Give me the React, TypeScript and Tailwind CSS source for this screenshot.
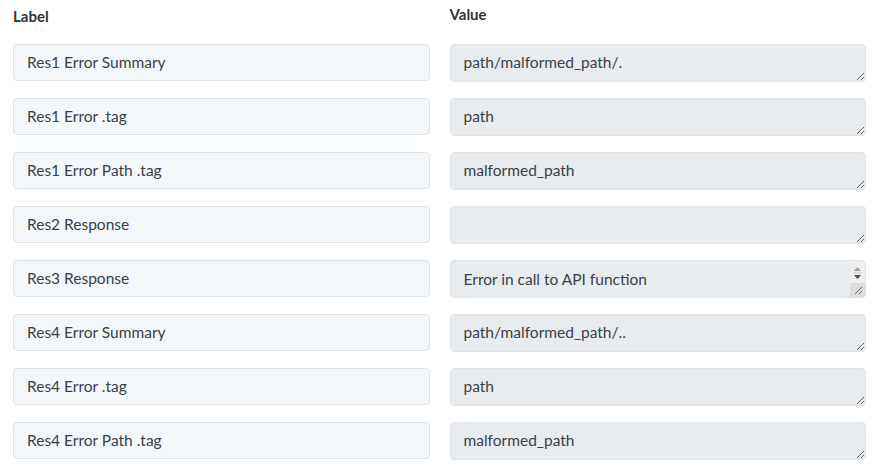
import React from "react";

const rows: { label: string; value: string; scroll?: boolean }[] = [
  { label: "Res1 Error Summary", value: "path/malformed_path/." },
  { label: "Res1 Error .tag", value: "path" },
  { label: "Res1 Error Path .tag", value: "malformed_path" },
  { label: "Res2 Response", value: "" },
  { label: "Res3 Response", value: "Error in call to API function", scroll: true },
  { label: "Res4 Error Summary", value: "path/malformed_path/.." },
  { label: "Res4 Error .tag", value: "path" },
  { label: "Res4 Error Path .tag", value: "malformed_path" },
];

function FakeScrollbar() {
  return (
    <div className="absolute right-[1px] top-[1px] bottom-[1px] w-[15px] flex flex-col rounded-r-[3px] overflow-hidden">
      <div className="h-[22px] bg-[#eceef0] flex flex-col items-center pt-[4px]">
        <svg width="9" height="14" viewBox="0 0 9 14">
          <path d="M1 6 L4.5 2 L8 6 Z" fill="#a3a3a3" />
          <line x1="0.5" y1="8" x2="8.5" y2="8" stroke="#c8c8c8" strokeWidth="1" />
          <path d="M1 10 L8 10 L4.5 14 Z" fill="#505050" />
        </svg>
      </div>
      <div className="flex-1 bg-[#dcdcdc]" />
    </div>
  );
}

export default function App() {
  return (
    <div
      className="w-[882px] h-[472px] bg-white overflow-hidden pl-[13px] pr-[16px] pt-[6px]"
      style={{ fontFamily: "Lato, 'Open Sans', sans-serif" }}
    >
      <div className="grid grid-cols-2 gap-x-[20px] h-[38px]">
        <div className="text-[15px] leading-[20px] font-bold text-[#2f3338]">Label</div>
        <div className="text-[15px] leading-[20px] font-bold text-[#2f3338] -mt-[2px]">Value</div>
      </div>
      <div className="flex flex-col gap-y-[16px]">
        {rows.map((r, i) => (
          <div key={i} className="grid grid-cols-2 gap-x-[20px] items-start h-[38px]">
            <input
              readOnly
              value={r.label}
              className="h-[37px] w-full rounded-[4px] border border-[#dde3ea] bg-[#f4f7fa] px-[13px] pb-[1px] text-[15.5px] text-[#3b4046] outline-none"
              style={{ fontFamily: "Lato, 'Open Sans', sans-serif" }}
            />
            <div className="relative h-[38px]">
              <textarea
                readOnly
                value={r.value}
                className={
                  "block h-[38px] w-full rounded-[4px] border border-[#e0e4e8] bg-[#e9ecef] px-[13px] text-[15.5px] leading-[20px] text-[#3b4046] outline-none overflow-hidden " +
                  (r.scroll ? "pt-[8px] resize-none" : "pt-[7px] resize-y")
                }
                style={{ fontFamily: "Lato, 'Open Sans', sans-serif" }}
              />
              {r.scroll && (
                <>
                  <FakeScrollbar />
                  <svg
                    className="absolute right-[3px] bottom-[3px]"
                    width="10"
                    height="10"
                    viewBox="0 0 10 10"
                  >
                    <line x1="9" y1="2" x2="2" y2="9" stroke="#6a6a6a" strokeWidth="1" />
                    <line x1="9" y1="6" x2="6" y2="9" stroke="#6a6a6a" strokeWidth="1" />
                  </svg>
                </>
              )}
            </div>
          </div>
        ))}
      </div>
    </div>
  );
}
